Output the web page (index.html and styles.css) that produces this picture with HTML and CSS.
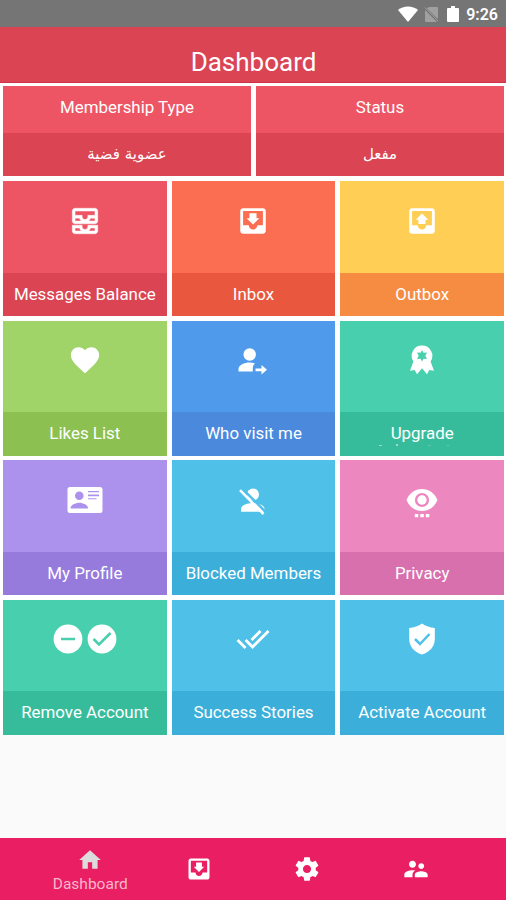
FILE: index.html
```html
<!DOCTYPE html>
<html lang="en">
    <head>
        <meta charset="utf-8">
        <title>Dashboard</title>
        <link rel="stylesheet" href="styles.css">
    </head>
    <body>
        <div class="statusbar">
            <svg class="wifi" viewBox="0 0 20 16"><path d="M10 16L0 4C5-.8 15-.8 20 4z"/></svg>
            <svg class="nosim" viewBox="0 0 15 16"><path d="M5 1h8q1 0 1 1v11L3 2.500zM1 4l12 12H2q-1 0-1-1z"/><path class="strike" d="M1 1.500L14 15"/></svg>
            <svg class="battery" viewBox="0 0 12 16"><path d="M1 2h3V0h4v2h3q1 0 1 1v12q0 1-1 1H1q-1 0-1-1V3q0-1 1-1z"/></svg>
            <span class="clock">9:26</span>
        </div>
        <h1 class="header">Dashboard</h1>

        <div class="content">
            <div class="cards">
                <div class="card">
                    <div class="name">Membership Type</div>
                    <div class="value" dir="rtl" lang="ar">عضوية فضية</div>
                </div>
                <div class="card">
                    <div class="name">Status</div>
                    <div class="value" dir="rtl" lang="ar">مفعل</div>
                </div>
            </div>

            <div class="tiles">
                <div class="tile red">
                    <div class="icons"><svg viewBox="0 0 24 24"><path class="heavy" d="M19 3H5c-1.100 0-2 .9-2 2v7c0 1.100.9 2 2 2h14c1.100 0 2-.9 2-2V5c0-1.100-.9-2-2-2zM5 10h3.130c.21.78.67 1.470 1.270 2H5v-2zm14 2h-4.400c.6-.53 1.060-1.220 1.270-2H19v2zm0-4h-5v1c0 1.070-.93 2-2 2s-2-.93-2-2V8H5V5h14v3zm-5 7v1c0 .47-.19.9-.48 1.250-.37.45-.92.75-1.520.75s-1.150-.3-1.520-.75c-.29-.35-.48-.78-.48-1.250v-1H3v4c0 1.100.9 2 2 2h14c1.100 0 2-.9 2-2v-4h-7zm-9 2h3.130c.02.09.06.17.09.25.24.68.65 1.280 1.180 1.750H5v-2zm14 2h-4.400c.54-.47.95-1.070 1.180-1.750.03-.08.07-.16.09-.25H19v2z"/></svg></div>
                    <div class="label">Messages Balance</div>
                </div>
                <div class="tile orange">
                    <div class="icons"><svg viewBox="0 0 24 24"><path d="M19 3H5c-1.100 0-2 .9-2 2v14c0 1.100.9 2 2 2h14c1.100 0 2-.9 2-2V5c0-1.100-.9-2-2-2zm0 12h-4c0 1.660-1.350 3-3 3s-3-1.340-3-3H5V5h14v10zm-2.500-5H14.500V6.500h-5V10H7.500l4.500 4.500 4.500-4.500z"/></svg></div>
                    <div class="label">Inbox</div>
                </div>
                <div class="tile yellow">
                    <div class="icons"><svg viewBox="0 0 24 24"><path d="M19 3H5c-1.100 0-2 .9-2 2v14c0 1.100.9 2 2 2h14c1.100 0 2-.9 2-2V5c0-1.100-.9-2-2-2zm0 12h-4c0 1.660-1.350 3-3 3s-3-1.340-3-3H5V5h14v10zM7.500 11.200h2v3h5v-3h2L12 6.700l-4.500 4.500z"/></svg></div>
                    <div class="label">Outbox</div>
                </div>

                <div class="tile green">
                    <div class="icons"><svg viewBox="0 0 24 24"><path d="M12 21.350l-1.450-1.320C5.400 15.360 2 12.280 2 8.500 2 5.420 4.420 3 7.500 3c1.740 0 3.410.81 4.500 2.090C13.090 3.810 14.760 3 16.500 3 19.580 3 22 5.420 22 8.500c0 3.780-3.400 6.860-8.550 11.540L12 21.350z"/></svg></div>
                    <div class="label">Likes List</div>
                </div>
                <div class="tile blue">
                    <div class="icons"><svg viewBox="0 0 34 34"><circle cx="13.700" cy="11.500" r="6.200"/><path d="M2.500 28.500V26c0-4 6-6.500 11-6.500 2.200 0 4 .3 5.500.9-1.500 1.100-2.200 2.700-2.200 4.600v3.500zM19.500 25.500h6V22l5.500 4.800-5.500 4.700v-3.300h-6z"/></svg></div>
                    <div class="label">Who visit me</div>
                </div>
                <div class="tile teal">
                    <div class="icons"><svg viewBox="0 0 34 34"><path fill-rule="evenodd" d="M17 2.500a10.300 10.300 0 0 1 8.600 16l3.400 9.300-4.700-.8-2.300 4.200-5-6-5 6L9.700 27l-4.700.8 3.400-9.300A10.300 10.300 0 0 1 17 2.500zM17 7.200l-1.500 2.600-3.500-.2 1.700 3.200-1.700 3.200 3.500-.2 1.500 2.600 1.500-2.600 3.500.2-1.700-3.200 1.700-3.200-3.500.2z"/></svg></div>
                    <div class="label upgrade">Upgrade
                        <svg class="dots" viewBox="0 0 72 3"><path d="M1 1h3v1H1zM18 0h2v2h-2z"/><path class="faint" d="M50 1h3v1h-3zM69 1h2v1h-2z"/></svg>
                    </div>
                </div>

                <div class="tile purple">
                    <div class="icons"><svg class="wide" viewBox="0 0 36 34"><path fill-rule="evenodd" d="M3 4h30q2.500 0 2.500 2.500v21Q35.500 30 33 30H3Q.5 30 .5 27.500v-21Q.5 4 3 4zM12.300 8.500a4.300 4.300 0 1 0 0 8.600 4.300 4.300 0 1 0 0-8.600zM3.500 25.500h17.600c0-3.500-5-5.700-8.800-5.700s-8.800 2.200-8.800 5.700zM21 8h11v1.300H21zm0 3.500h11v1.800H21zm0 3.700h8.500v1H21z"/></svg></div>
                    <div class="label">My Profile</div>
                </div>
                <div class="tile sky">
                    <div class="icons"><svg viewBox="0 0 34 34"><circle cx="17" cy="11.500" r="6"/><path d="M5 28.700V26c0-4 7-6 12-6s11.500 2.200 11.500 6v2.700z"/><path class="gap" d="M5.500 4.800L30.500 29.800"/><path class="slash" d="M4 7.200L27.500 31"/></svg></div>
                    <div class="label">Blocked Members</div>
                </div>
                <div class="tile pink">
                    <div class="icons"><svg viewBox="0 0 34 34"><path fill-rule="evenodd" d="M17 6c7 0 13 4.500 15.500 11C30 23.500 24 28 17 28S4 23.500 1.500 17C4 10.500 10 6 17 6zm0 3.900a7.100 7.100 0 1 0 0 14.200 7.100 7.100 0 1 0 0-14.200z"/><circle cx="17" cy="17" r="4.700"/><path d="M9.800 31h3.500v3.300H9.800zM15.300 31h3.500v3.300h-3.500zM20.800 31h3.500v3.300h-3.500z"/></svg></div>
                    <div class="label">Privacy</div>
                </div>

                <div class="tile teal">
                    <div class="icons">
                        <svg viewBox="0 0 34 34"><circle cx="17" cy="17" r="14.400"/><path class="mark" d="M10 17h14"/></svg>
                        <svg viewBox="0 0 34 34"><circle cx="17" cy="17" r="14.400"/><path class="mark" d="M8.500 17l5.500 5.500L25.500 11"/></svg>
                    </div>
                    <div class="label">Remove Account</div>
                </div>
                <div class="tile sky">
                    <div class="icons"><svg viewBox="0 0 24 24"><path d="M18 7l-1.410-1.410-6.340 6.340 1.410 1.410L18 7zm4.240-1.410L11.660 16.170 7.480 12l-1.410 1.410L11.660 19l12-12-1.420-1.410zM.41 13.410L6 19l1.410-1.410L1.830 12 .41 13.410z"/></svg></div>
                    <div class="label">Success Stories</div>
                </div>
                <div class="tile sky">
                    <div class="icons"><svg viewBox="0 0 34 34"><path d="M17 1.500c3.500 2.500 8 4 12.800 4.500V17c0 7-4.500 13-12.800 15.500C8.700 30 4.200 24 4.200 17V6C9 5.500 13.500 4 17 1.500z"/><path class="mark" d="M10 17l5 5 9.500-10"/></svg></div>
                    <div class="label">Activate Account</div>
                </div>
            </div>
        </div>

        <div class="navbar">
            <div class="item active">
                <svg viewBox="0 0 24 24"><path d="M10 20v-6h4v6h5v-8h3L12 3 2 12h3v8z"/></svg>
                <span>Dashboard</span>
            </div>
            <div class="item">
                <svg viewBox="0 0 24 24"><path d="M19 3H5c-1.100 0-2 .9-2 2v14c0 1.100.9 2 2 2h14c1.100 0 2-.9 2-2V5c0-1.100-.9-2-2-2zm0 12h-4c0 1.660-1.350 3-3 3s-3-1.340-3-3H5V5h14v10zm-2.500-5H14.500V6.500h-5V10H7.500l4.500 4.500 4.500-4.500z"/></svg>
            </div>
            <div class="item">
                <svg viewBox="0 0 24 24"><path d="M19.430 12.980c.04-.32.07-.64.07-.98s-.03-.66-.07-.98l2.110-1.650c.19-.15.24-.42.12-.64l-2-3.460c-.12-.22-.39-.3-.61-.22l-2.490 1c-.52-.4-1.080-.73-1.690-.98l-.38-2.650C14.460 2.180 14.250 2 14 2h-4c-.25 0-.46.18-.49.42l-.38 2.650c-.61.25-1.170.59-1.690.98l-2.490-1c-.23-.09-.49 0-.61.22l-2 3.460c-.13.22-.07.49.12.64l2.110 1.650c-.04.32-.07.65-.07.98s.03.66.07.98l-2.110 1.650c-.19.15-.24.42-.12.64l2 3.460c.12.22.39.3.61.22l2.490-1c.52.4 1.080.73 1.690.98l.38 2.650c.03.24.24.42.49.42h4c.25 0 .46-.18.49-.42l.38-2.650c.61-.25 1.170-.59 1.690-.98l2.490 1c.23.09.49 0 .61-.22l2-3.460c.12-.22.07-.49-.12-.64l-2.110-1.650zM12 15.500c-1.930 0-3.500-1.570-3.500-3.500s1.570-3.500 3.500-3.500 3.500 1.570 3.500 3.500-1.570 3.500-3.500 3.500z"/></svg>
            </div>
            <div class="item">
                <svg viewBox="0 0 24 24"><path d="M16.500 12c1.380 0 2.490-1.120 2.490-2.500S17.880 7 16.500 7 14 8.120 14 9.500s1.120 2.500 2.500 2.500zM9 11c1.660 0 2.990-1.340 2.990-3S10.660 5 9 5C7.340 5 6 6.340 6 8s1.340 3 3 3zm7.500 3c-1.830 0-5.500.92-5.500 2.750V19h11v-2.250c0-1.830-3.670-2.750-5.500-2.750zM9 13c-2.330 0-7 1.170-7 3.500V19h7v-2.250c0-.85.33-2.340 2.370-3.470C10.500 13.100 9.660 13 9 13z"/></svg>
            </div>
        </div>
    </body>
</html>
```
FILE: styles.css
```css
body {
    display: flex;
    flex-direction: column;
    height: 900px;
    margin: 0;
    overflow: hidden;
    background-color: #fafafa;
    color: #fff;
    font-family: Roboto, "Noto Sans", sans-serif;
}

svg {
    display: block;
    fill: currentColor;
}

.statusbar {
    display: flex;
    align-items: center;
    justify-content: flex-end;
    height: 27px;
    padding-right: 8px;
    box-sizing: border-box;
    background-color: #757575;
}

.wifi {
    width: 20px;
    height: 16px;
}

.nosim {
    width: 15px;
    height: 16px;
    margin-left: 6px;
    color: #a0a0a0;
}

.strike {
    fill: none;
    stroke: #a0a0a0;
}

.battery {
    width: 12px;
    height: 16px;
    margin-left: 8px;
}

.clock {
    margin-left: 7px;
    padding-top: 2px;
    font-size: 16px;
    font-weight: 600;
}

.header {
    height: 56px;
    margin: 0;
    padding: 7px 0 0 1px;
    box-sizing: border-box;
    background-color: #da4453;
    border-bottom: 1px solid #cf3046;
    font-size: 26px;
    font-weight: 400;
    line-height: 56px;
    text-align: center;
}

.content {
    padding: 3px 2px 0 3px;
    margin-bottom: auto;
    background-color: #fff;
    font-size: 16.900px;
}

.cards {
    display: grid;
    grid-template-columns: 1fr 1fr;
    gap: 5px;
    margin-bottom: 5px;
    text-align: center;
}

.card .name {
    height: 47px;
    line-height: 43px;
    background-color: #ed5565;
}

.card .value {
    height: 43px;
    line-height: 42px;
    background-color: #da4453;
    font-family: "DejaVu Sans", sans-serif;
    font-size: 15px;
}

.tiles {
    display: grid;
    grid-template-columns: repeat(3, 1fr);
    gap: 4.600px 5px;
}

.tile {
    display: flex;
    flex-direction: column;
    height: 135px;
    background-color: var(--top);
}

.icons {
    display: flex;
    justify-content: center;
    height: 91.500px;
    padding-top: 22.500px;
    box-sizing: border-box;
}

.icons svg {
    width: 34px;
    height: 34px;
    overflow: visible;
}

.icons .wide {
    width: 36px;
}

.heavy {
    stroke: #fff;
    stroke-width: 0.300;
}

.label {
    flex: 1;
    background-color: var(--bottom);
    line-height: 42px;
    text-align: center;
}

.upgrade {
    position: relative;
}

.dots {
    position: absolute;
    left: 38px;
    bottom: 9px;
    width: 72px;
    height: 3px;
    opacity: 0.5;
}

.faint {
    opacity: 0.4;
}

.mark,
.gap,
.slash {
    fill: none;
    stroke: var(--top);
    stroke-width: 2.500;
}

.slash {
    stroke: #fff;
}

.red { --top: #ed5565; --bottom: #da4453; }
.orange { --top: #fc6e51; --bottom: #e9573f; }
.yellow { --top: #ffce54; --bottom: #f68c42; }
.green { --top: #a0d468; --bottom: #8cc152; }
.blue { --top: #4f9aea; --bottom: #4a89dc; }
.teal { --top: #48cfad; --bottom: #37bc9b; }
.purple { --top: #ac92ec; --bottom: #967adc; }
.sky { --top: #4fc1e9; --bottom: #3bafda; }
.pink { --top: #ec87c0; --bottom: #d770ad; }

.navbar {
    display: flex;
    justify-content: center;
    height: 62px;
    background-color: #e91e63;
}

.item {
    display: flex;
    flex-direction: column;
    align-items: center;
    justify-content: center;
    width: 108.500px;
}

.item svg {
    width: 28px;
    height: 28px;
}

.active {
    padding-top: 4px;
    box-sizing: border-box;
    color: #f9b6cc;
    font-size: 15.500px;
    line-height: 22px;
}

.active svg {
    width: 26px;
    height: 26px;
    color: #dcdcdc;
}
```
